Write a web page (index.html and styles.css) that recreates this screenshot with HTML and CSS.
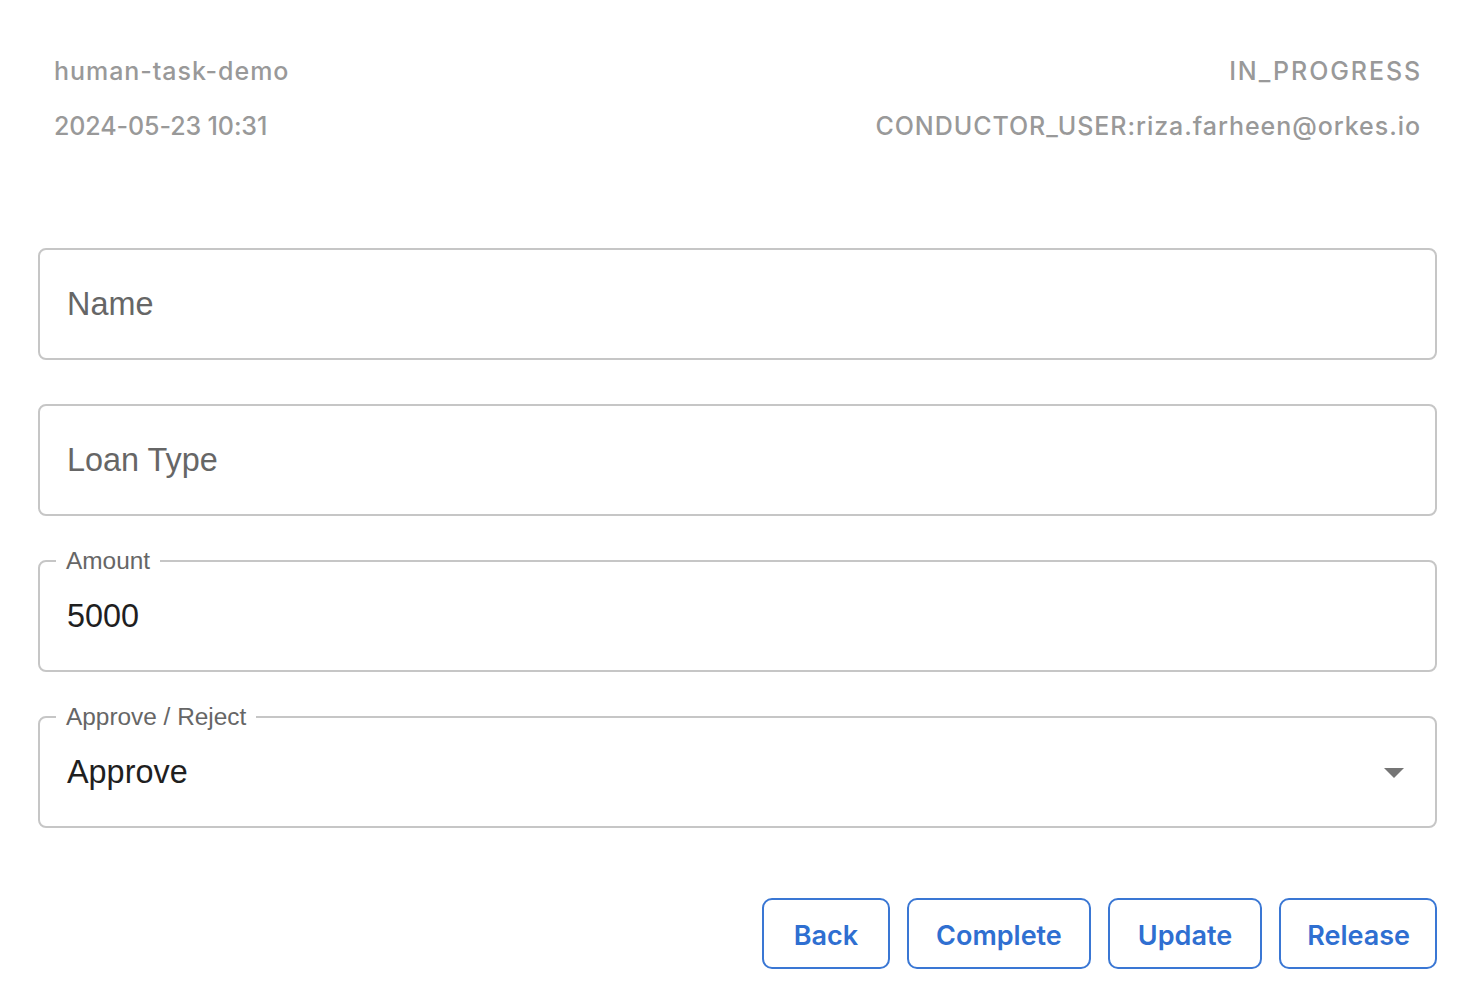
FILE: index.html
```html
<!DOCTYPE html>
<html>
<head>
<meta charset="utf-8">
<link rel="stylesheet" href="styles.css">
</head>
<body>
<main class="page">
  <header class="meta">
    <div class="meta-row">
      <span>human-task-demo</span>
      <span class="status">IN_PROGRESS</span>
    </div>
    <div class="meta-row">
      <span class="date">2024-05-23 10:31</span>
      <span>CONDUCTOR_USER:riza.farheen@orkes.io</span>
    </div>
  </header>

  <form class="form">
    <fieldset class="field">
      <legend class="legend blank"></legend>
      <div class="field-body"><span class="placeholder">Name</span></div>
    </fieldset>
    <fieldset class="field">
      <legend class="legend blank"></legend>
      <div class="field-body"><span class="placeholder">Loan Type</span></div>
    </fieldset>
    <fieldset class="field">
      <legend class="legend">Amount</legend>
      <div class="field-body"><span class="value">5000</span></div>
    </fieldset>
    <fieldset class="field">
      <legend class="legend">Approve / Reject</legend>
      <div class="field-body select">
        <span class="value">Approve</span>
        <svg class="caret" width="20" height="10" viewBox="0 0 20 10"><path d="M0 0L10 10L20 0Z" fill="#757575"/></svg>
      </div>
    </fieldset>

    <div class="actions">
      <button type="button" class="btn btn-back">Back</button>
      <button type="button" class="btn btn-complete">Complete</button>
      <button type="button" class="btn btn-update">Update</button>
      <button type="button" class="btn btn-release">Release</button>
    </div>
  </form>
</main>
</body>
</html>
```

FILE: styles.css
```css
* { box-sizing: border-box; }

html, body {
  margin: 0;
  background: #ffffff;
}

.page {
  width: 1480px;
  padding: 56px 43px 0 38px;
}

.meta {
  padding: 0 16px;
  display: flex;
  flex-direction: column;
  gap: 25px;
  font-family: "Inter", "Lato", sans-serif;
  font-weight: 500;
  font-size: 25px;
  letter-spacing: 0.95px;
  color: #999999;
}

.meta-row {
  display: flex;
  justify-content: space-between;
  line-height: 30px;
}

.status {
  letter-spacing: 1.9px;
  margin-right: -1px;
}

.date {
  letter-spacing: -0.1px;
}

.form {
  margin-top: 96px;
  display: flex;
  flex-direction: column;
  gap: 33px;
}

.field {
  margin: 0;
  padding: 0 16px;
  border: 2px solid #c6c6c6;
  border-radius: 8px;
  min-width: 0;
}

.legend {
  height: 24px;
  padding: 0 10px;
  font-family: "Liberation Sans", Arial, sans-serif;
  font-size: 24.4px;
  line-height: 24px;
  color: #666666;
}

.legend.blank {
  padding: 0;
  width: 0;
}

.field-body {
  height: 97px;
  padding: 0 15px 10px 11px;
  display: flex;
  align-items: center;
  font-family: "Liberation Sans", Arial, sans-serif;
}

.placeholder {
  font-size: 32.4px;
  color: #666666;
}

.value {
  font-size: 32.4px;
  color: #1f1f1f;
}

.select {
  justify-content: space-between;
}

.caret {
  display: block;
}

.actions {
  margin-top: 37px;
  display: flex;
  justify-content: flex-end;
  gap: 17px;
}

.btn {
  height: 71px;
  padding: 3px 28px 0;
  background: #ffffff;
  border: 2px solid #3a77d4;
  border-radius: 10px;
  font-family: "Inter", "Lato", sans-serif;
  font-weight: 600;
  font-size: 27px;
  color: #2f6fd1;
  cursor: pointer;
}

.btn-back {
  padding-left: 30px;
  padding-right: 30px;
}

.btn-complete {
  padding-left: 27px;
  padding-right: 27px;
}

.btn-update {
  padding-left: 28px;
  padding-right: 28px;
}

.btn-release {
  padding-left: 26px;
  padding-right: 25px;
}
```
